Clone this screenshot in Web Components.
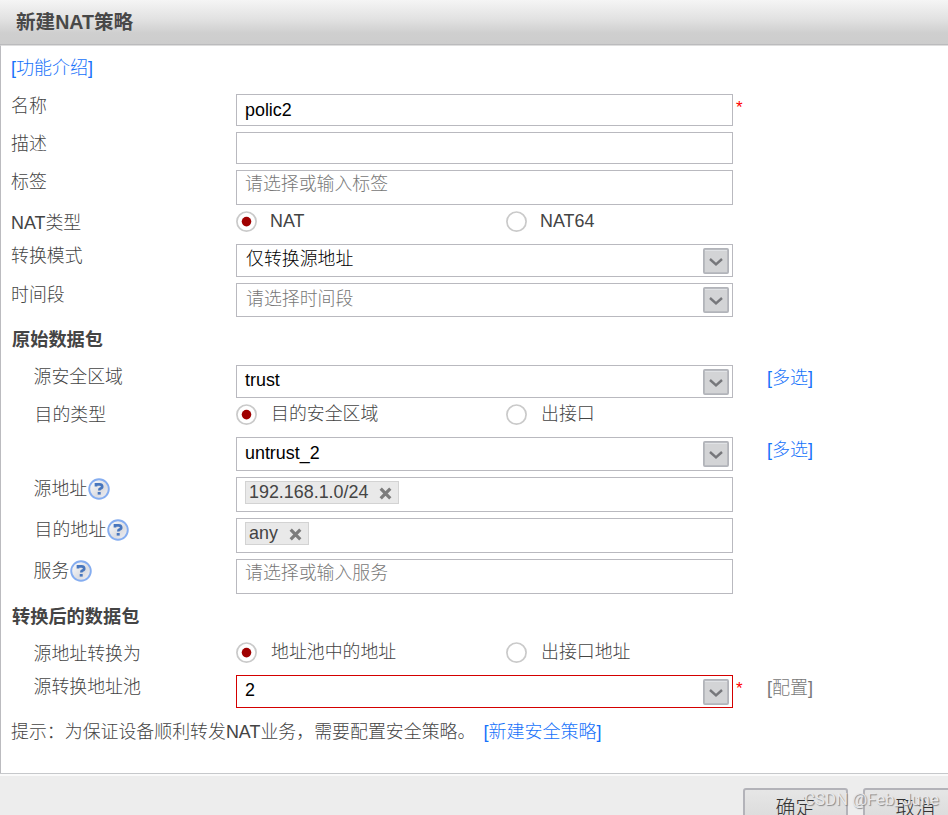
<!DOCTYPE html>
<html lang="zh-CN">
<head>
<meta charset="utf-8">
<title>新建NAT策略</title>
<style>
html,body{margin:0;height:100%;overflow:hidden;background:#fff}
body{font:300 17.9px/20px "Liberation Sans","Noto Sans CJK SC",sans-serif;color:#444}
</style>
</head>
<body>
<nat-dialog heading="新建NAT策略">
  <nat-link style="margin:12px 0 0 10px;height:36px">[功能介绍]</nat-link>
  <nat-row label="名称" style="--h:38px;--ly:2px"><nat-field style="--h:32px;--ty:5px;--tx:8px">polic2</nat-field><nat-star slot="after"></nat-star></nat-row>
  <nat-row label="描述" style="--h:38px;--ly:2px"><nat-field style="--h:32px"></nat-field></nat-row>
  <nat-row label="标签" style="--h:41px;--ly:2px"><nat-field hint style="--h:35px;--ty:3px">请选择或输入标签</nat-field></nat-row>
  <nat-row label="NAT类型" style="--h:33px;--ly:2px"><nat-radio checked>NAT</nat-radio><nat-radio>NAT64</nat-radio></nat-row>
  <nat-row label="转换模式" style="--h:39px;--ly:2px"><nat-field select style="--h:33px;--ty:4px;--tx:9px">仅转换源地址</nat-field></nat-row>
  <nat-row label="时间段" style="--h:40px;--ly:2px"><nat-field select hint style="--h:34px;--ty:5px;--tx:9px">请选择时间段</nat-field></nat-row>
  <nat-section style="height:42px;--ty:7px">原始数据包</nat-section>
  <nat-row sub label="源安全区域" style="--h:38px;--ly:2px"><nat-field select style="--h:33px;--ty:4px">trust</nat-field><nat-link slot="after" style="margin:3px 0 0 34px">[多选]</nat-link></nat-row>
  <nat-row sub label="目的类型" style="--h:34px;--ly:2px;--x:34px"><nat-radio checked style="--tx:1px;--ry:1px">目的安全区域</nat-radio><nat-radio style="--tx:1px;--ry:1px">出接口</nat-radio></nat-row>
  <nat-row sub style="--h:40px"><nat-field select style="--h:34px;--ty:5px">untrust_2</nat-field><nat-link slot="after" style="margin:3px 0 0 34px">[多选]</nat-link></nat-row>
  <nat-row sub help label="源地址" style="--h:41px;--ly:2px"><nat-field style="--h:35px"><nat-tag>192.168.1.0/24</nat-tag></nat-field></nat-row>
  <nat-row sub help label="目的地址" style="--h:41px;--ly:2px;--x:34px"><nat-field style="--h:35px"><nat-tag>any</nat-tag></nat-field></nat-row>
  <nat-row sub help label="服务" style="--h:41px;--ly:2px"><nat-field hint style="--h:35px;--ty:3px">请选择或输入服务</nat-field></nat-row>
  <nat-section style="height:42px;--ty:7px">转换后的数据包</nat-section>
  <nat-row sub label="源地址转换为" style="--h:33px;--ly:2px"><nat-radio checked style="--tx:1px">地址池中的地址</nat-radio><nat-radio style="--tx:1px">出接口地址</nat-radio></nat-row>
  <nat-row sub label="源转换地址池" style="--h:47px;--ly:2px"><nat-field select invalid style="--h:33px;--ty:4px">2</nat-field><nat-star slot="after"></nat-star><nat-link muted slot="after" style="margin:3px 0 0 24px">[配置]</nat-link></nat-row>
  <nat-tip>提示：为保证设备顺利转发NAT业务，需要配置安全策略。<nat-link slot="link">[新建安全策略]</nat-link></nat-tip>
  <nat-button slot="actions">确定</nat-button>
  <nat-button slot="actions">取消</nat-button>
</nat-dialog>
<nat-mark>CSDN @Feb_June</nat-mark>
<script>
const define=(name,render)=>customElements.define(name,class extends HTMLElement{
  constructor(){super();this.attachShadow({mode:'open'}).innerHTML=render(this)}
});

define('nat-dialog',el=>`<style>
:host{display:flex;flex-direction:column;height:815px;box-sizing:border-box}
header{box-sizing:border-box;height:45px;flex:none;padding:12px 16px;font-weight:700;font-size:19.6px;color:#484848;background:linear-gradient(#f5f5f5,#e1e1e1 45%,#cfcfcf 75%,#cdcdcd);border-bottom:1px solid #bbbbbd}
main{box-sizing:border-box;height:728px;flex:none;border-left:1px solid #bbbbbf;border-top:1px solid #dedede;display:flex;flex-direction:column}
footer{box-sizing:border-box;flex:1;min-height:0;display:flex;justify-content:flex-start;gap:15px;padding:14px 0 0 743px;background:#ededed;border-top:1px solid #c6c8cb;box-shadow:inset 0 2px #fafafa;overflow:hidden}
</style><header>${el.getAttribute('heading')}</header><main><slot></slot></main><footer><slot name="actions"></slot></footer>`);

define('nat-link',()=>`<style>:host{display:block;flex:none;color:#1672fa;white-space:nowrap;font-size:18px}:host([muted]){color:#777}</style><slot></slot>`);

define('nat-star',()=>`<style>:host{display:block;flex:none;width:10px;box-sizing:border-box;padding:4px 0 0 3px;color:#f00;font-size:17px;font-weight:400}</style>*`);

define('nat-section',()=>`<style>:host{display:block;flex:none;box-sizing:border-box;padding:var(--ty) 0 0 11px;font-weight:700;font-size:18.2px;color:#444}</style><slot></slot>`);

define('nat-row',el=>`<style>
:host{display:grid;grid-template-columns:235px 497px 1fr;height:var(--h);flex:none}
.label{display:flex;padding:var(--ly,0) 0 0 10px;white-space:nowrap}
:host([sub]) .label{padding-left:calc(var(--x,33px) - 0.5px)}
.main,.after{display:flex;align-items:flex-start}
svg{flex:none;width:22px;height:22px;margin:-1px 0 0 1px}
</style><div class="label">${el.getAttribute('label')||''}${el.hasAttribute('help')?`<svg viewBox="0 0 22 22"><defs><linearGradient id="g" x2="1" y2="1"><stop stop-color="#fff"/><stop offset=".6" stop-color="#dcdde2"/><stop offset="1" stop-color="#f4f4f8"/></linearGradient></defs><circle cx="11" cy="11" r="9.8" fill="url(#g)" stroke="#85adf0" stroke-width="1.9"/><path d="M8 8.4V6.3h3.6c3.2 0 3.4 3.8.8 4.3-.9.2-1.1.6-1.1 1.8" fill="none" stroke="#4876bd" stroke-width="2.7"/><path d="M9.7 14h3v2.6h-3z" fill="#4876bd"/></svg>`:''}</div><div class="main"><slot></slot></div><div class="after"><slot name="after"></slot></div>`);

define('nat-field',el=>`<style>
:host{display:flex;box-sizing:border-box;width:497px;height:var(--h);border:1px solid #b9b9bf;background:#fff;color:#000;justify-content:space-between}
:host([hint]){color:#777}
:host([invalid]){border-color:#d40000}
.text{padding:var(--ty,0) 0 0 var(--tx,8px)}
svg{width:26px;height:26px;margin:3px 3px 0 0;flex:none}
</style><div class="text"><slot></slot></div>${el.hasAttribute('select')?`<svg viewBox="0 0 26 26"><rect x=".9" y=".9" width="24.2" height="24.2" rx="1" fill="#d3d4d6" stroke="#b2b4ba" stroke-width="1.8"/><path d="M2 2.5h22" stroke="#e1e3e6"/><path d="M7 11l6 5.4 6-5.4" fill="none" stroke="#76777b" stroke-width="2.4"/></svg>`:''}`);

define('nat-radio',el=>`<style>
:host{display:flex;width:270px;height:22px;padding-top:var(--ry,0);flex:none;color:#444}
svg{width:22px;height:22px;flex:none}
span{padding-left:calc(12px + var(--tx,0px));white-space:nowrap}
</style><svg viewBox="0 0 22 22"><circle cx="10.5" cy="10.6" r="9.6" fill="#fff" stroke="#cacaca" stroke-width="1.7"/>${el.hasAttribute('checked')?'<circle cx="10.5" cy="10.6" r="4.8" fill="#a00000"/>':''}</svg><span><slot></slot></span>`);

define('nat-tag',()=>`<style>
:host{display:flex;box-sizing:border-box;height:23px;margin:3px 0 0 0;padding:0 6px 0 3px;border:1px solid #d3d3d3;background:#e9e9e9;color:#444;align-items:flex-start}
svg{width:13px;height:13px;margin:5px 0 0 11px;flex:none}
</style><slot></slot><svg viewBox="0 0 13 13"><path d="M1.7 1.7l9.6 9.6M11.3 1.7l-9.6 9.6" stroke="#7d7d7d" stroke-width="3.2"/></svg>`);

define('nat-tip',()=>`<style>:host{display:flex;flex:none;padding-left:10px;white-space:nowrap;gap:8px}span{letter-spacing:.02px}</style><span><slot></slot></span><slot name="link"></slot>`);

define('nat-button',()=>`<style>:host{display:block;flex:none;box-sizing:border-box;width:105px;height:40px;padding-top:7px;text-align:center;border:2px solid #b3b3b9;border-radius:3px;background:linear-gradient(#e6e6e6,#d9d9d9);font-size:20px;line-height:22px;color:#333}</style><slot></slot>`);

define('nat-mark',()=>`<style>:host{position:absolute;left:804px;top:789px;font:400 16.8px/20px Roboto,sans-serif;color:#e8e8ea;text-shadow:1px 1px 1px #888;white-space:nowrap}</style><slot></slot>`);
</script>
</body>
</html>
